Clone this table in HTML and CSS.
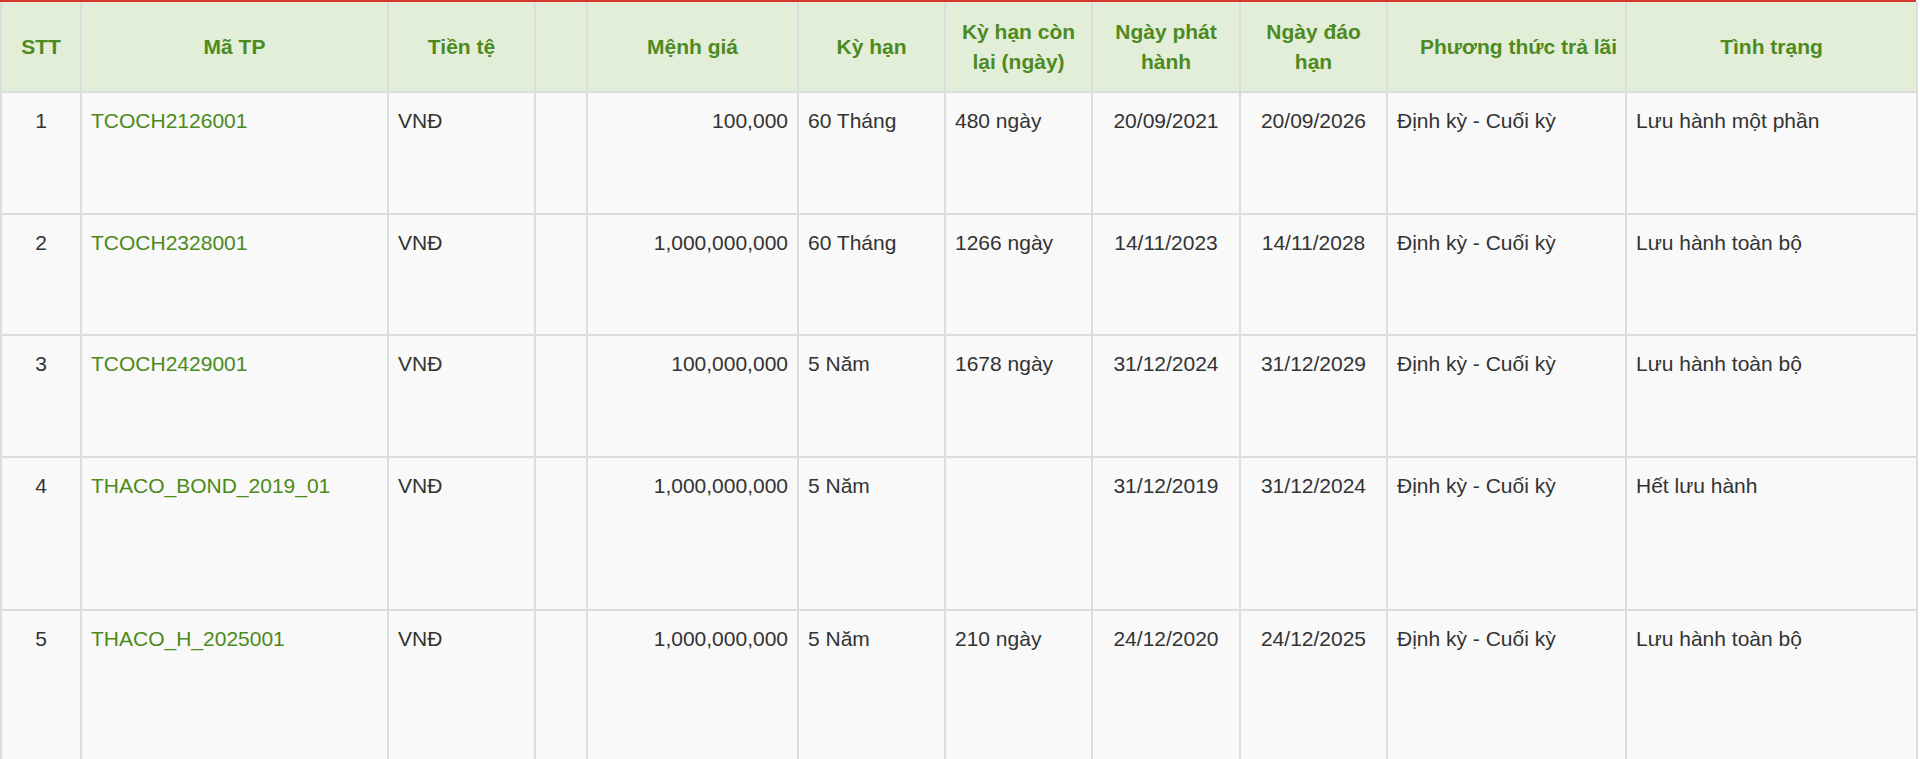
FILE: index.html
```html
<!DOCTYPE html>
<html lang="vi">
<head>
<meta charset="utf-8">
<title>Trái phiếu</title>
<link rel="stylesheet" href="styles.css">
</head>
<body>
<div class="wrap">
<table class="bonds">
  <colgroup>
    <col class="c-stt"><col class="c-ma"><col class="c-tt"><col class="c-empty"><col class="c-mg"><col class="c-kh"><col class="c-khcl"><col class="c-nph"><col class="c-ndh"><col class="c-pt"><col class="c-tr">
  </colgroup>
  <thead>
    <tr>
      <th>STT</th>
      <th>Mã TP</th>
      <th>Tiền tệ</th>
      <th></th>
      <th>Mệnh giá</th>
      <th>Kỳ hạn</th>
      <th>Kỳ hạn còn lại (ngày)</th>
      <th>Ngày phát hành</th>
      <th>Ngày đáo hạn</th>
      <th class="th-pt">Phương thức trả lãi</th>
      <th>Tình trạng</th>
    </tr>
  </thead>
  <tbody>
    <tr class="row-std">
      <td class="center">1</td>
      <td><a href="#">TCOCH2126001</a></td>
      <td>VNĐ</td>
      <td></td>
      <td class="right">100,000</td>
      <td>60 Tháng</td>
      <td>480 ngày</td>
      <td class="center">20/09/2021</td>
      <td class="center">20/09/2026</td>
      <td>Định kỳ - Cuối kỳ</td>
      <td>Lưu hành một phần</td>
    </tr>
    <tr class="row-std">
      <td class="center">2</td>
      <td><a href="#">TCOCH2328001</a></td>
      <td>VNĐ</td>
      <td></td>
      <td class="right">1,000,000,000</td>
      <td>60 Tháng</td>
      <td>1266 ngày</td>
      <td class="center">14/11/2023</td>
      <td class="center">14/11/2028</td>
      <td>Định kỳ - Cuối kỳ</td>
      <td>Lưu hành toàn bộ</td>
    </tr>
    <tr class="row-std">
      <td class="center">3</td>
      <td><a href="#">TCOCH2429001</a></td>
      <td>VNĐ</td>
      <td></td>
      <td class="right">100,000,000</td>
      <td>5 Năm</td>
      <td>1678 ngày</td>
      <td class="center">31/12/2024</td>
      <td class="center">31/12/2029</td>
      <td>Định kỳ - Cuối kỳ</td>
      <td>Lưu hành toàn bộ</td>
    </tr>
    <tr class="row-tall">
      <td class="center">4</td>
      <td><a href="#">THACO_BOND_2019_01</a></td>
      <td>VNĐ</td>
      <td></td>
      <td class="right">1,000,000,000</td>
      <td>5 Năm</td>
      <td></td>
      <td class="center">31/12/2019</td>
      <td class="center">31/12/2024</td>
      <td>Định kỳ - Cuối kỳ</td>
      <td>Hết lưu hành</td>
    </tr>
    <tr class="row-last">
      <td class="center">5</td>
      <td><a href="#">THACO_H_2025001</a></td>
      <td>VNĐ</td>
      <td></td>
      <td class="right">1,000,000,000</td>
      <td>5 Năm</td>
      <td>210 ngày</td>
      <td class="center">24/12/2020</td>
      <td class="center">24/12/2025</td>
      <td>Định kỳ - Cuối kỳ</td>
      <td>Lưu hành toàn bộ</td>
    </tr>
  </tbody>
</table>
</div>
</body>
</html>
```

FILE: styles.css
```css
html, body {
  margin: 0;
  padding: 0;
  background: #ffffff;
}

body {
  font-family: "Liberation Sans", Arial, sans-serif;
  font-size: 21px;
  line-height: 30px;
  color: #333333;
  overflow: hidden;
}

.wrap {
  width: 1916px;
  border-top: 2px solid #d7362c;
}

.bonds {
  width: 1916px;
  table-layout: fixed;
  border-collapse: collapse;
  background: #f9f9f9;
}

.c-stt { width: 80px; }
.c-ma { width: 307px; }
.c-tt { width: 147px; }
.c-empty { width: 52px; }
.c-mg { width: 211px; }
.c-kh { width: 147px; }
.c-khcl { width: 147px; }
.c-nph { width: 148px; }
.c-ndh { width: 147px; }
.c-pt { width: 239px; }
.c-tr { width: 291px; }

.bonds th,
.bonds td {
  border: 2px solid #dcdcdc;
  padding: 13px 9px 14px 9px;
  vertical-align: top;
}

.bonds thead th {
  border-top: 0;
  background: #e3eed9;
  color: #4d8a1f;
  font-weight: bold;
  text-align: center;
  vertical-align: middle;
  padding-top: 15px;
  padding-bottom: 14px;
}

.bonds .th-pt {
  padding-left: 30px;
  padding-right: 6px;
}

.bonds td.center { text-align: center; }
.bonds td.right { text-align: right; }

.bonds a {
  color: #4a8a18;
  text-decoration: none;
}

.row-std { height: 121.7px; }
.row-tall { height: 153px; }
.row-last { height: 200px; }
```
